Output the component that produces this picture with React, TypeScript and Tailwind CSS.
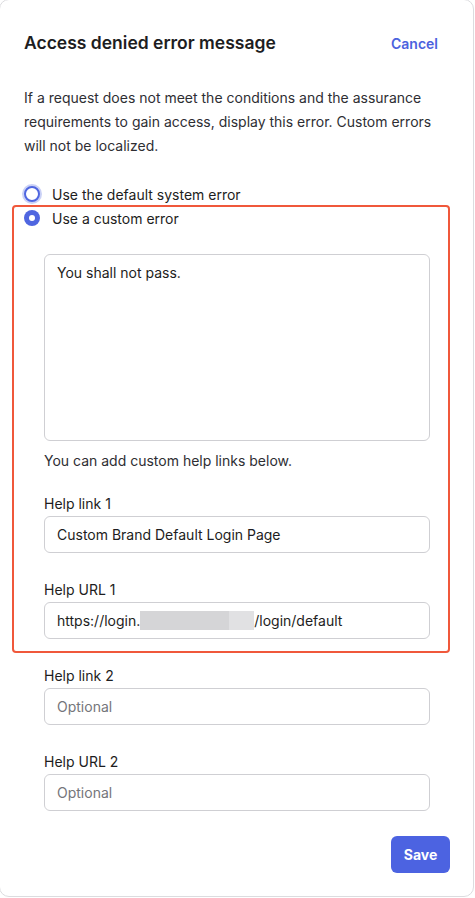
import React from 'react';

const Field = ({ label, value, placeholder }: { label: string; value?: React.ReactNode; placeholder?: string }) => (
  <div>
    <div className="h-5 leading-5 text-[14px] text-[#1d1d21]">{label}</div>
    <div className="mt-[2px] h-[37px] border border-[#cfcfd3] rounded-[6px] px-3 flex items-center text-[14px]">
      {value ? (
        <span className="text-[#1d1d21] flex items-center">{value}</span>
      ) : (
        <span className="text-[#75757a]">{placeholder}</span>
      )}
    </div>
  </div>
);

export default function App() {
  return (
    <div className="min-h-[898px] bg-white" style={{ fontFamily: 'Inter, "Noto Sans", sans-serif' }}>
      <div className="-ml-px -mt-px w-[475px] h-[898px] border border-[#dcdcdf] rounded-[10px] bg-white pl-6 pr-[23px] overflow-hidden">
        {/* header */}
        <div className="mt-[31px] h-6 flex items-center justify-between">
          <h1 className="text-[17.5px] font-semibold text-[#1d1d21]">Access denied error message</h1>
          <button className="mr-[12px] text-[14px] font-semibold text-[#4b62de]">Cancel</button>
        </div>

        <p className="mt-[31px] text-[14px] leading-6 text-[#2e2e33]">
          If a request does not meet the conditions and the assurance requirements to gain access, display this error. Custom errors will not be localized.
        </p>

        {/* radio group */}
        <div className="mt-6 h-6 flex items-center">
          <span className="w-4 h-4 rounded-full border-2 border-[#4f66e0] bg-white shadow-[0_0_0_2px_rgba(79,102,224,0.3)]" />
          <span className="ml-3 text-[14px] text-[#1d1d21]">Use the default system error</span>
        </div>

        <div className="-mt-px -ml-3 border-2 border-[#f0583b] rounded-[4px] pl-[10px] pr-[18px] pb-3">
          <div className="h-[22px] flex items-center">
            <span className="w-4 h-4 rounded-full bg-[#4f66e0] flex items-center justify-center">
              <span className="w-1.5 h-1.5 rounded-full bg-white" />
            </span>
            <span className="ml-3 text-[14px] text-[#1d1d21]">Use a custom error</span>
          </div>

          <div className="pl-5">
            <div className="mt-[25px] h-[187px] border border-[#cfcfd3] rounded-[6px] px-3 py-2 text-[14px] leading-5 text-[#1d1d21]">
              You shall not pass.
            </div>
            <div className="mt-[10px] h-5 leading-5 text-[14px] text-[#2e2e33]">You can add custom help links below.</div>
            <div className="mt-[23px]">
              <Field label="Help link 1" value="Custom Brand Default Login Page" />
            </div>
            <div className="mt-[27px]">
              <Field
                label="Help URL 1"
                value={
                  <>
                    https://login.
                    <span className="inline-block w-[89px] h-[19px] bg-[#d5d5d7]" />
                    <span className="inline-block w-[25px] h-[19px] bg-[#e1e1e3]" />
                    /login/default
                  </>
                }
              />
            </div>
          </div>
        </div>

        <div className="pl-5 pr-5">
          <div className="mt-[13px]">
            <Field label="Help link 2" placeholder="Optional" />
          </div>
          <div className="mt-[27px]">
            <Field label="Help URL 2" placeholder="Optional" />
          </div>
        </div>

        <div className="mt-[25px] flex justify-end">
          <button className="w-[59px] h-[37px] rounded-[6px] bg-[#4c63e1] text-white text-[14px] font-bold">Save</button>
        </div>
      </div>
    </div>
  );
}
